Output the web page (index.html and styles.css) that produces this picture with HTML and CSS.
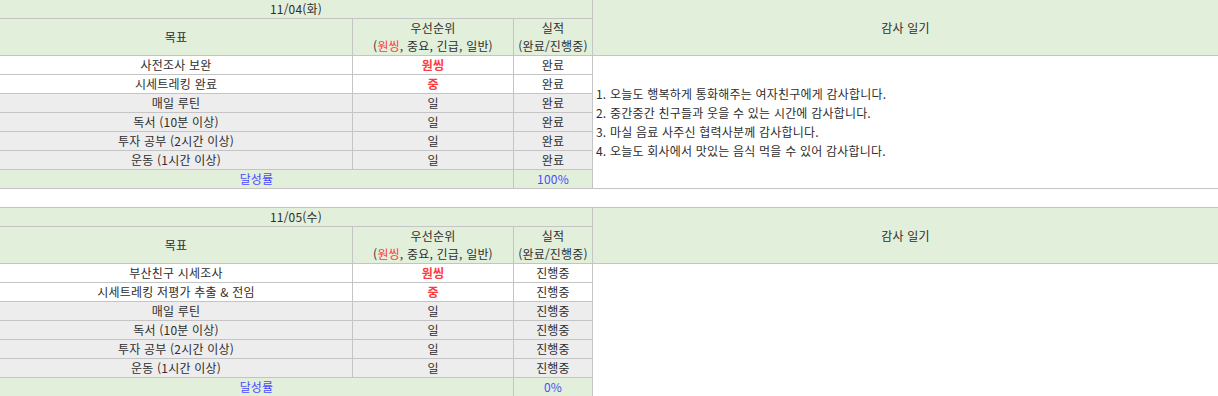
FILE: index.html
```html
<!DOCTYPE html>
<html lang="ko">
<head>
<meta charset="utf-8">
<title>목표 & 감사 일기</title>
<link rel="stylesheet" href="styles.css">
</head>
<body>
<table class="day">
  <colgroup>
    <col class="c-goal"><col class="c-pri"><col class="c-res"><col class="c-diary">
  </colgroup>
  <tr class="hd date-row">
    <td colspan="3">11/04(화)</td>
    <td rowspan="2" class="diary-head">감사 일기</td>
  </tr>
  <tr class="hd head-row">
    <td>목표</td>
    <td>우선순위<br>(<span class="red">원씽</span>, 중요, 긴급, 일반)</td>
    <td>실적<br>(완료/진행중)</td>
  </tr>
  <tr class="w"><td>사전조사 보완</td><td class="red b">원씽</td><td>완료</td>
    <td rowspan="7" class="diary">1. 오늘도 행복하게 통화해주는 여자친구에게 감사합니다.<br>2. 중간중간 친구들과 웃을 수 있는 시간에 감사합니다.<br>3. 마실 음료 사주신 협력사분께 감사합니다.<br>4. 오늘도 회사에서 맛있는 음식 먹을 수 있어 감사합니다.</td></tr>
  <tr class="w"><td>시세트레킹 완료</td><td class="red b">중</td><td>완료</td></tr>
  <tr class="g"><td>매일 루틴</td><td>일</td><td>완료</td></tr>
  <tr class="g"><td>독서 (10분 이상)</td><td>일</td><td>완료</td></tr>
  <tr class="g"><td>투자 공부 (2시간 이상)</td><td>일</td><td>완료</td></tr>
  <tr class="g"><td>운동 (1시간 이상)</td><td>일</td><td>완료</td></tr>
  <tr class="hd sum"><td colspan="2">달성률</td><td>100%</td></tr>
</table>

<table class="day second">
  <colgroup>
    <col class="c-goal"><col class="c-pri"><col class="c-res"><col class="c-diary">
  </colgroup>
  <tr class="hd date-row">
    <td colspan="3">11/05(수)</td>
    <td rowspan="2" class="diary-head">감사 일기</td>
  </tr>
  <tr class="hd head-row">
    <td>목표</td>
    <td>우선순위<br>(<span class="red">원씽</span>, 중요, 긴급, 일반)</td>
    <td>실적<br>(완료/진행중)</td>
  </tr>
  <tr class="w"><td>부산친구 시세조사</td><td class="red b">원씽</td><td>진행중</td>
    <td rowspan="7" class="diary"></td></tr>
  <tr class="w"><td>시세트레킹 저평가 추출 &amp; 전임</td><td class="red b">중</td><td>진행중</td></tr>
  <tr class="g"><td>매일 루틴</td><td>일</td><td>진행중</td></tr>
  <tr class="g"><td>독서 (10분 이상)</td><td>일</td><td>진행중</td></tr>
  <tr class="g"><td>투자 공부 (2시간 이상)</td><td>일</td><td>진행중</td></tr>
  <tr class="g"><td>운동 (1시간 이상)</td><td>일</td><td>진행중</td></tr>
  <tr class="hd sum"><td colspan="2">달성률</td><td>0%</td></tr>
</table>
</body>
</html>
```
FILE: styles.css
```css
html, body {
  margin: 0;
  padding: 0;
  background: #ffffff;
}
body {
  font-family: "Noto Sans CJK KR", "Noto Sans", sans-serif;
  font-size: 12px;
  letter-spacing: 0.2px;
  color: #2e2e2e;
  overflow: hidden;
}
.day {
  border-collapse: collapse;
  table-layout: fixed;
  width: 1219px;
  margin: -1px 0 0 -1px;
}
.day.second {
  margin-top: 18px;
}
.c-goal { width: 353px; }
.c-pri { width: 161px; }
.c-res { width: 79px; }
.c-diary { width: 626px; }
.day td {
  border: 1px solid #c4c4c4;
  padding: 0;
  height: 18px;
  line-height: 18px;
  text-align: center;
  vertical-align: middle;
  white-space: nowrap;
  overflow: hidden;
}
.hd td {
  background: #e2efda;
}
.head-row td {
  height: 36px;
}
.w td {
  background: #ffffff;
}
.g td {
  background: #ededed;
}
.day td.diary {
  background: #ffffff;
  text-align: left;
  padding-left: 3px;
  line-height: 19px;
}
.day td.diary-head {
  background: #e2efda;
}
.red {
  color: #ff3b3b;
}
.b {
  font-weight: bold;
}
.sum td {
  color: #4b4bff;
}
```
